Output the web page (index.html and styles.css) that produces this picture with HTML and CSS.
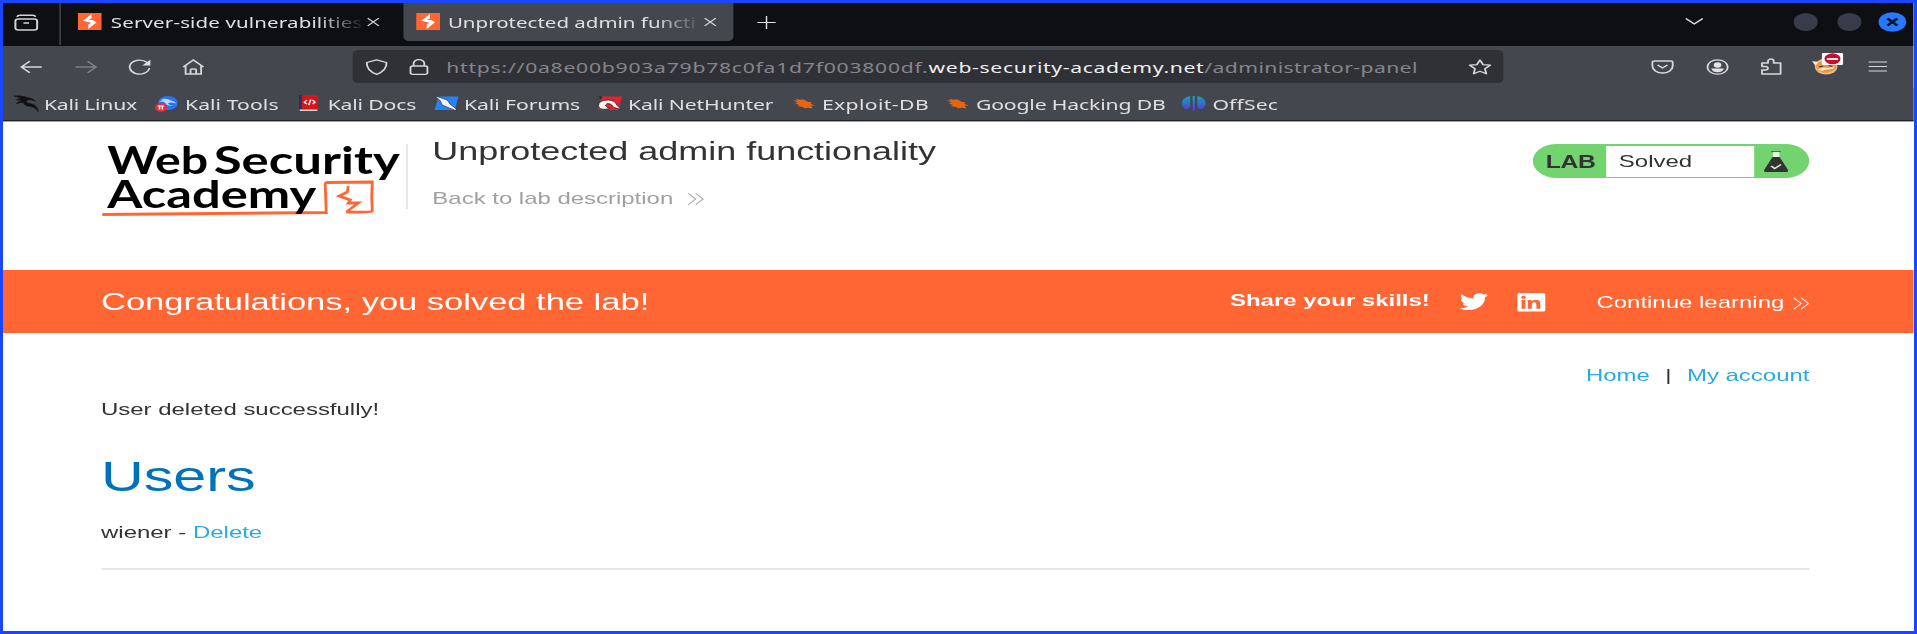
FILE: index.html
```html
<!DOCTYPE html>
<html lang="en">
<head>
<meta charset="utf-8">
<title>Unprotected admin functionality</title>
<link rel="stylesheet" href="styles.css">
</head>
<body>
<svg width="0" height="0" class="defs">
  <symbol id="burp" viewBox="0 0 17 17"><path fill="#f63" d="M0 0h17v17H0z"/><path fill="#fff" d="M9.800 1v4.300L7.600 6.800l3 .2 2.800 2.300-4.600 5.200L7.500 16v-4.600l2-1.700-5.800-2z"/></symbol>
  <symbol id="close" viewBox="0 0 10 10"><path d="M.7.7l8.600 8.600M9.300.7L.7 9.300" fill="none" stroke="#d5d5d8" stroke-width="1.100"/></symbol>
  <symbol id="chev" viewBox="0 0 13 13"><path d="M1 .5l5.500 6L1 12.500M6.500 .5l5.500 6-5.500 6" fill="none" stroke="currentColor" stroke-width=".9"/></symbol>
  <symbol id="bug" viewBox="0 0 16 12"><path d="M1 3l3 .3L3 1.500l3 1 2-.5 3.500 2.500 2 .2-.5 1.500 3 1.800-2.700-.2 1 3-3-.8-2.300.5L7 9l-3-.5L5.500 7.500 2.500 6l2-.7z" fill="#e8650f"/></symbol>
</svg>
<div class="screen"><div class="stage">
  <header class="tabs">
    <svg class="archive" viewBox="0 0 17 17"><rect x=".8" y="5" width="15.400" height="11" rx="2" /><path d="M2 2.800q.3-1.600 2-1.600h9q1.700 0 2 1.600M6.500 9h4"/></svg>
    <div class="tab first"><svg class="fav"><use href="#burp"/></svg><span class="tabtext t1">Server-side vulnerabilities</span><svg class="x"><use href="#close"/></svg></div>
    <div class="tab active"><svg class="fav"><use href="#burp"/></svg><span class="tabtext t2">Unprotected admin functi</span><svg class="x"><use href="#close"/></svg></div>
    <svg class="plus" viewBox="0 0 13 13"><path d="M6.500 0v13M0 6.500h13"/></svg>
    <svg class="down" viewBox="0 0 13 7"><path d="M.5.5l6 5.500 6-5.500"/></svg>
    <i class="wbtn"></i><i class="wbtn"></i>
    <svg class="wclose" viewBox="0 0 20 20"><circle cx="10" cy="10" r="9.800" fill="#2777ff"/><path d="M6.500 6.500l7 7M13.500 6.500l-7 7" stroke="#0b1224" stroke-width="2.200"/></svg>
  </header>
  <nav class="tools">
    <svg class="ic back" viewBox="0 0 16 16"><path d="M15.500 8H1M7 2.300L1 8l6 5.700"/></svg>
    <svg class="ic fwd" viewBox="0 0 16 16"><path d="M.5 8H15M9 2.300L15 8l-6 5.700"/></svg>
    <svg class="ic reload" viewBox="0 0 16 16"><path d="M14.800 9A7 7 0 1 1 13.200 3.500"/><path d="M15.500.8v5.700H9.800z" fill="#e2e2e5" stroke="none"/></svg>
    <svg class="ic home" viewBox="0 0 16 16"><path d="M.8 8L8 1l7.200 7M2.500 6.800V15h11V6.800M6 15v-4q0-1 1-1h2q1 0 1 1v4"/></svg>
    <div class="url">
      <svg class="ic shield" viewBox="0 0 16 16"><path d="M8 .8l7 2.700Q15.300 11.500 8 15.300.7 11.500 1 3.500z" stroke-linejoin="round"/></svg>
      <svg class="ic lock" viewBox="0 0 16 16"><rect x="2" y="7" width="12" height="8.300" rx="1.500"/><path d="M4.200 7V4.500a3.800 3.800 0 0 1 7.600 0V7"/></svg>
      <span class="addr">https://0a8e00b903a79b78c0fa1d7f003800df.<b>web-security-academy.net</b><span class="path">/administrator-panel</span></span>
      <svg class="ic star" viewBox="0 0 17 16"><path d="M8.500 1l2.200 4.600 5.100.6-3.800 3.500 1 5.100-4.500-2.500L4 14.800l1-5.100L1.200 6.200l5.100-.6z" stroke-linejoin="round"/></svg>
    </div>
    <svg class="ic pocket" viewBox="0 0 16 16"><path d="M2 2h12q1.200 0 1.200 1.200V7A7.200 7 0 0 1 .8 7V3.200Q.8 2 2 2zM4.500 6L8 9l3.500-3"/></svg>
    <svg class="ic acct" viewBox="0 0 16 16"><circle cx="8" cy="8" r="7.200"/><circle cx="8" cy="6" r="2.700" fill="#e2e2e5" stroke="none"/><path d="M3.500 9.500h9Q11.800 13.200 8 13.200T3.500 9.500z" fill="#e2e2e5" stroke="none"/></svg>
    <svg class="ic puzzle" viewBox="0 0 16 17"><path d="M1.500 6.500V5h4.300V3a2 2 0 0 1 4 0v2h4.900v11H1.500v-4H4a1.700 1.700 0 0 0 0-3.500H1.500z" stroke-linejoin="round"/></svg>
    <svg class="fox" viewBox="0 0 22 22"><circle cx="10" cy="13.500" r="8" fill="#efb98a"/><path d="M2.500 11.500Q5 7 10 10l5-2q4 3 1.500 8-4 4.500-9 3.500Q3 17.500 2.500 11.500z" fill="#f39434"/><path d="M0 8l4.500 1L2.500 13zM4 16l4-1.500 4 .5 4-2-1 3-5 .5-3 1.500z" fill="#f3ead9"/><path d="M5 14l3-1M12 12.500l2.500 1" stroke="#4a3a2a"/><rect x="7" y="0" width="15" height="12" rx="1" fill="#fff"/><ellipse cx="14.500" cy="5.800" rx="5.700" ry="5.500" fill="#c8102e"/><path d="M10.500 6h8" stroke="#fff" stroke-width="1.800"/></svg>
    <svg class="ic menu" viewBox="0 0 13 13"><path d="M0 2h13M0 6.500h13M0 11h13"/></svg>
  </nav>
  <nav class="marks">
    <a class="b1"><svg viewBox="0 0 17 17"><path d="M0 1q5-1 9 1.500Q13 3 15 6l-3-1.300Q8 4.500 8.500 7q1 1.500 4 2 4 1.500 4.500 7.500-2-4.500-5.500-5Q7 11 6.500 7.500 3.500 7 1.500 9q1-3 4-3.500-2-1-4-.5 1-1.500 3.500-1.500Q2 1.500 0 1z" fill="#111" stroke="#111" stroke-width=".5"/></svg><span>Kali Linux</span></a>
    <a class="b2"><svg viewBox="0 0 17 17"><circle cx="9" cy="8" r="7" fill="#2a74f0"/><path d="M4 4q5-1 7 1.500 3 .5 3.500 3-4-2-5.500 0 1 2 4 2-5 1-6-3Q4 6 2.500 7 4 5 6 5z" fill="#bcd9ff"/><circle cx="4" cy="12.500" r="4.300" fill="#e92f35"/><path d="M1.800 11h4.400M3 11v3.500M5 11v3.500" stroke="#fff"/></svg><span>Kali Tools</span></a>
    <a class="b3"><svg viewBox="0 0 15 17"><path d="M0 0h13.500v14H0z" fill="#d6151b"/><path d="M0 0h2v14H0z" fill="#27306b"/><path d="M.5 14.500h12.500V16H.5z" fill="#e5ddd2"/><path d="M5.500 5L3.700 7.200l1.800 2M9.500 5l1.800 2.200-1.800 2M8.300 4.500L6.800 10" fill="none" stroke="#fff" stroke-width="1.100"/></svg><span>Kali Docs</span></a>
    <a class="b4"><svg viewBox="0 0 17 17"><path d="M3 1.500h14l-2.500 13.500H0z" fill="#2583fa"/><path d="M0 1l4 1.500 5 2.500 2 4 4.500 5-.5 1.500-4.500-2.500-5-3L4 5.500z" fill="#f2f2f2" stroke="#222" stroke-width=".5"/></svg><span>Kali Forums</span></a>
    <a class="b5"><svg viewBox="0 0 17 17"><path d="M3 1.500h14l-2.500 13.500H0z" fill="#e8212f"/><path d="M0 1l3 1-1 2z" fill="#222"/><path d="M.3 11q0-6 7-6 5 .5 6 5l3 4.500-5-2Q9.500 8 6.500 8.500 3.500 11 8.500 13.500 1 16 .3 11z" fill="#f5f0ee" stroke="#222" stroke-width=".6"/></svg><span>Kali NetHunter</span></a>
    <a class="b6"><svg><use href="#bug"/></svg><span>Exploit-DB</span></a>
    <a class="b7"><svg><use href="#bug"/></svg><span>Google Hacking DB</span></a>
    <a class="b8"><svg viewBox="0 0 17 17"><defs><linearGradient id="off" x2="0" y2="1"><stop stop-color="#13a5b8"/><stop offset="1" stop-color="#5a36d8"/></linearGradient></defs><path d="M6 1v11q-1.500 3-3.500 2Q-1 10 .5 5.500 2 2 6 1zM11 1v11q1.500 3 3.500 2 3.500-4 2-8.500Q15 2 11 1zM7.700 1h1.600v15H7.700z" fill="url(#off)"/></svg><span>OffSec</span></a>
  </nav>
  <section class="head">
    <svg class="logo" viewBox="100 140 302 80" preserveAspectRatio="none">
      <text x="107" y="174.500" textLength="101" lengthAdjust="spacingAndGlyphs">Web</text>
      <text x="213.500" y="174.500" textLength="186" lengthAdjust="spacingAndGlyphs">Security</text>
      <path d="M102 214.500q110-.5 224-2l-1-26q-1-4 2-4l45-.5q-1 15 0 29-1 1.500-26 1" />
      <path d="M348 186l-1 6-8 4 11 4-2 3 10 0-12 9" />
      <text x="107" y="208.500" textLength="209" lengthAdjust="spacingAndGlyphs">Academy</text>
    </svg>
    <i class="rule"></i>
    <div class="titles"><h2>Unprotected admin functionality</h2><p><span>Back to lab description</span><svg><use href="#chev"/></svg></p></div>
    <div class="badge"><b>LAB</b><span class="state">Solved</span><svg viewBox="0 0 17 21"><path d="M5 .7h7" stroke="#555" /><path d="M6.200 1h4.600v5H6.200z" fill="#e9f8e8"/><path d="M6 6h5l6 13q.3 2-1 2H1q-1.300 0-1-2z" fill="#333"/><path d="M5 15l2.500 2.500L12 13.500" fill="none" stroke="#c5efc3" stroke-width="1.400"/></svg></div>
  </section>
  <section class="banner">
    <h3>Congratulations, you solved the lab!</h3>
    <b class="share">Share your skills!</b>
    <svg class="tw" viewBox="1.500 3.500 21 17" preserveAspectRatio="none"><path fill="#fff" d="M22.500 5.600c-.8.300-1.600.6-2.500.7.900-.5 1.600-1.400 1.900-2.400-.8.500-1.800.9-2.700 1.100a4.300 4.300 0 0 0-7.300 3.900C8.300 8.700 5.100 7 3 4.400a4.300 4.300 0 0 0 1.300 5.700c-.7 0-1.400-.2-1.900-.5 0 2.100 1.500 3.900 3.400 4.300-.6.200-1.300.2-1.900.1.500 1.700 2.100 2.900 4 3A8.600 8.600 0 0 1 1.500 18.700a12.100 12.100 0 0 0 6.600 1.900c7.900 0 12.500-6.700 12.200-12.800.9-.6 1.600-1.400 2.200-2.200z"/></svg>
    <svg class="li" viewBox="0 0 20 18.500" preserveAspectRatio="none"><rect width="20" height="18.500" rx="1.500" fill="#fff"/><path fill="#f63" d="M3 7h2.800v8.800H3zM7.500 7h2.700v1.300q.8-1.500 2.900-1.500 3.300 0 3.300 3.800v5.200h-2.800v-4.600q0-2-1.500-2-1.800 0-1.800 2v4.600H7.500z"/><circle cx="4.400" cy="4.300" r="1.600" fill="#f63"/></svg>
    <span class="cont"><span>Continue learning</span><svg><use href="#chev"/></svg></span>
  </section>
  <main>
    <div class="links"><a>Home</a><i>|</i><a>My account</a></div>
    <p class="msg">User deleted successfully!</p>
    <h1>Users</h1>
    <p class="user">wiener - <a>Delete</a></p>
    <hr>
  </main>
</div></div>
</body>
</html>
```
FILE: styles.css
```css
:root { --u: calc(1px / 1.41); }
* { box-sizing: border-box; }
body, h1, h2, h3, p { margin: 0; font-weight: 400; }
body { background: #fff; overflow: hidden; }
.defs { position: absolute; }
.screen { width: 1917px; height: 634px; border: 3px solid #1a46ff; overflow: hidden; }
.stage { width: calc(1911 * var(--u)); height: 628px; transform: scaleX(1.41); transform-origin: 0 0; font-family: "Liberation Sans", Arial, sans-serif; font-size: 17px; color: #333; white-space: nowrap; }
svg { display: block; flex: none; overflow: visible; }
b { font-weight: 700; }
i { font-style: normal; }

.tabs, .tools, .marks { display: flex; font-family: "Noto Sans", sans-serif; color: #e0e0e3; }
.tabs { height: 43px; background: #0e0f13; align-items: flex-start; font-size: 14.5px; }
.archive { width: 17px; height: 17px; margin: 10.5px 0 0 calc(11 * var(--u)); fill: none; stroke: #d5d5d8; stroke-width: 1.4; }
.tab { display: flex; height: 37.500px; align-items: center; border-radius: 0 0 4px 4px; }
.first { width: calc(344 * var(--u)); margin-left: calc(21 * var(--u)); border-left: 1px solid #4a4b50; height: 42px; padding: 0 0 4.500px calc(18 * var(--u)); border-radius: 0; }
.active { width: calc(331 * var(--u)); background: #45474e; padding-left: calc(12.500 * var(--u)); }
.fav { width: 17px; height: 17px; }
.tabtext { width: calc(252 * var(--u)); margin-left: calc(8.500 * var(--u)); overflow: hidden; -webkit-mask-image: linear-gradient(90deg, #000 82%, transparent 101%); mask-image: linear-gradient(90deg, #000 82%, transparent 101%); }
.t1 { letter-spacing: .12px; }
.t2 { letter-spacing: .02px; }
.x { width: 9.200px; height: 10px; margin-left: calc(4.500 * var(--u)); }
.plus { width: 13px; height: 13px; margin: 13px 0 0 calc(24 * var(--u)); fill: none; stroke: #e2e2e5; }
.down { width: 13px; height: 7px; margin: 15px 0 0 calc(908.500 * var(--u)); fill: none; stroke: #e2e2e5; stroke-width: 1.200; }
.wbtn { width: calc(24 * var(--u)); height: 17.500px; border-radius: 50%; background: #383c4a; margin: 10px 0 0 calc(20 * var(--u)); }
.down + .wbtn { margin-left: calc(91 * var(--u)); }
.wclose { width: 20px; height: 20px; margin: 9px 0 0 calc(16.500 * var(--u)); }

.tools { height: 41px; background: #45474e; align-items: center; padding-left: calc(17.500 * var(--u)); }
.ic { width: 16px; height: 16px; fill: none; stroke: #d8d8db; stroke-width: 1.300; }
.fwd { margin-left: calc(31.500 * var(--u)); opacity: .4; }
.reload { margin-left: calc(31 * var(--u)); }
.home { margin-left: calc(31 * var(--u)); }
.url { display: flex; align-items: center; height: 33px; width: calc(1151 * var(--u)); margin-left: calc(148.500 * var(--u)); padding-left: calc(12 * var(--u)); background: #303136; border-radius: 4px; font-size: 15px; color: #85868b; }
.lock { margin-left: calc(20 * var(--u)); }
.addr { width: calc(1021.500 * var(--u)); margin-left: calc(16.500 * var(--u)); letter-spacing: .53px; }
.addr b { font-weight: 400; color: #f0f0f2; letter-spacing: .47px; }
.path { letter-spacing: .27px; }
.star { width: 17px; }
.pocket { margin-left: calc(147.500 * var(--u)); }
.acct { margin-left: calc(32 * var(--u)); }
.puzzle { margin-left: calc(31 * var(--u)); height: 17px; }
.fox { width: 22px; height: 22px; margin: -6px 0 0 calc(30 * var(--u)); }
.menu { width: 13.300px; height: 13px; margin-left: calc(26 * var(--u)); stroke-width: 1.200; }

.marks { height: 34px; background: #45474e; border-bottom: 1px solid #222326; box-shadow: 0 1px #a0a0a4; font-size: 15px; padding-left: calc(11 * var(--u)); }
.marks a { display: flex; align-items: center; }
.marks svg { width: 17px; height: 17px; margin-right: calc(6 * var(--u)); }
.b1 { width: calc(141 * var(--u)); letter-spacing: -.16px; }
.b2 { width: calc(144 * var(--u)); letter-spacing: .06px; }
.marks .b3 { width: calc(135 * var(--u)); letter-spacing: -.1px; }
.marks .b3 svg { width: 15px; margin-right: calc(7.500 * var(--u)); }
.b4 { width: calc(164 * var(--u)); letter-spacing: -.04px; }
.b5 { width: calc(193.500 * var(--u)); letter-spacing: -.08px; }
.b6 { width: calc(154 * var(--u)); letter-spacing: .27px; }
.b7 { width: calc(237 * var(--u)); letter-spacing: -.1px; }
.b8 { letter-spacing: .1px; }
.marks .b6 svg, .marks .b7 svg { height: 13px; margin-right: calc(6.500 * var(--u)); }

.head { display: flex; height: 149px; padding: 19px 0 0 calc(97 * var(--u)); }
.logo { width: calc(302 * var(--u)); height: 80px; }
.logo text { font: 700 39px Lato, sans-serif; fill: #000; }
.logo path { fill: none; stroke: #f63; stroke-width: 2.800; }
.rule { width: 1px; height: 65px; margin: 4px 0 0 calc(4.500 * var(--u)); background: #ddd; }
.titles { width: calc(1100.500 * var(--u)); margin-left: calc(24.500 * var(--u)); }
h2 { font-size: 25.500px; line-height: 30px; margin-top: -4.500px; }
.titles p { display: flex; align-items: center; line-height: 24px; margin-top: 21.500px; color: #a0a0a0; }
.titles p span, .msg { letter-spacing: -.01px; }
.titles svg { width: 12.500px; height: 14px; margin-left: calc(13 * var(--u)); }
.badge { display: flex; align-items: center; width: calc(277 * var(--u)); height: 34px; margin-top: 4px; background: #72d36f; border-radius: 17px; overflow: hidden; }
.badge b { width: calc(74 * var(--u)); padding: 2px 0 0 calc(13 * var(--u)); font-size: 17.500px; letter-spacing: -.3px; }
.state { width: calc(147 * var(--u)); height: 31px; padding-left: calc(12 * var(--u)); line-height: 32px; background: #fff; }
.badge svg { width: 17px; height: 21px; margin-left: calc(10.500 * var(--u)); }

.banner { display: flex; align-items: center; height: 63px; background: #f63; color: #fff; padding-left: calc(98 * var(--u)); }
h3 { width: calc(1129 * var(--u)); font-size: 24.500px; letter-spacing: -.02px; }
.share { width: calc(229 * var(--u)); margin-top: -1px; }
.tw { width: calc(28.500 * var(--u)); height: 17px; }
.li { width: calc(28 * var(--u)); height: 18.500px; margin: 2px 0 0 calc(30 * var(--u)); }
.cont { display: flex; align-items: center; margin-left: calc(51 * var(--u)); padding-top: 3px; }
.cont svg { width: 12.500px; height: 13px; margin-left: calc(8 * var(--u)); }

main { padding: 30px calc(104.500 * var(--u)) 0 calc(98 * var(--u)); }
.links { display: flex; justify-content: flex-end; line-height: 26px; height: 34px; color: #29abe2; }
.links i { color: #333; width: calc(37 * var(--u)); text-align: center; }
.msg { line-height: 26px; }
h1 { font-size: 42px; line-height: 50px; margin-top: 29px; color: #0072bc; }
.user { line-height: 26px; margin-top: 18px; }
.user a { color: #29abe2; }
hr { height: 2px; margin: 22px 0 0; border: 0; background: #e6e6e6; }
```
